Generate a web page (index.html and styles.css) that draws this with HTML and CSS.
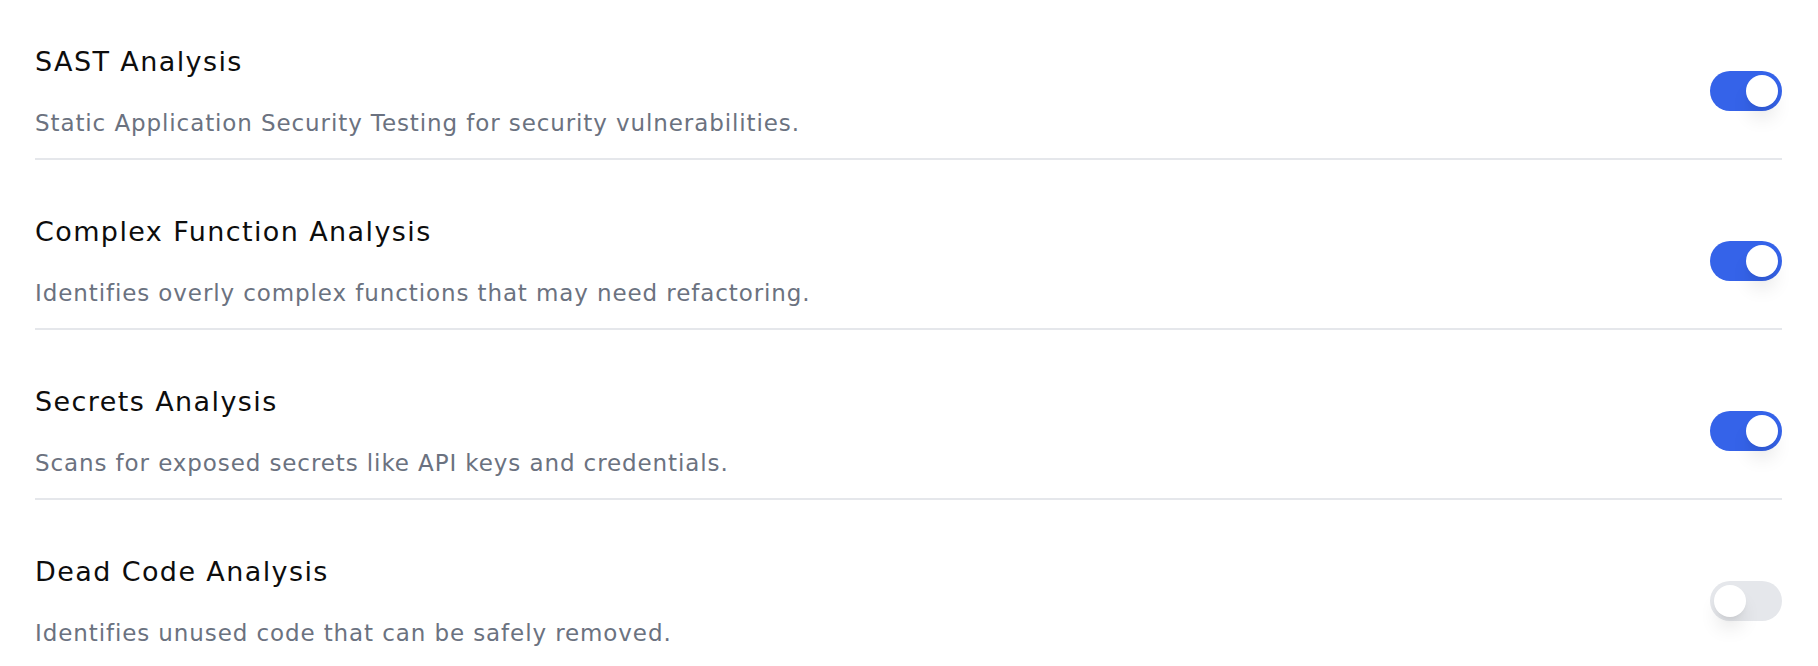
FILE: index.html
```html
<!DOCTYPE html>
<html lang="en">
<head>
  <meta charset="UTF-8">
  <meta name="viewport" content="width=device-width, initial-scale=1.0">
  <title>Analysis Settings</title>
  <link rel="stylesheet" href="styles.css">
</head>
<body>
  <div class="settings">
    <div class="setting-row">
      <div class="setting-text">
        <h3 class="setting-title">SAST Analysis</h3>
        <p class="setting-desc">Static Application Security Testing for security vulnerabilities.</p>
      </div>
      <label class="toggle">
        <input type="checkbox" checked>
        <span class="track"><span class="knob"></span></span>
      </label>
    </div>

    <div class="setting-row">
      <div class="setting-text">
        <h3 class="setting-title">Complex Function Analysis</h3>
        <p class="setting-desc">Identifies overly complex functions that may need refactoring.</p>
      </div>
      <label class="toggle">
        <input type="checkbox" checked>
        <span class="track"><span class="knob"></span></span>
      </label>
    </div>

    <div class="setting-row">
      <div class="setting-text">
        <h3 class="setting-title">Secrets Analysis</h3>
        <p class="setting-desc">Scans for exposed secrets like API keys and credentials.</p>
      </div>
      <label class="toggle">
        <input type="checkbox" checked>
        <span class="track"><span class="knob"></span></span>
      </label>
    </div>

    <div class="setting-row">
      <div class="setting-text">
        <h3 class="setting-title">Dead Code Analysis</h3>
        <p class="setting-desc">Identifies unused code that can be safely removed.</p>
      </div>
      <label class="toggle">
        <input type="checkbox">
        <span class="track"><span class="knob"></span></span>
      </label>
    </div>
  </div>
</body>
</html>
```

FILE: styles.css
```css
/* Global */
body {
  margin: 0;
  padding: 0;
  background-color: #ffffff;
  font-family: "DejaVu Sans", "Open Sans", sans-serif;
  color: #0d0d0d;
}

.settings {
  padding: 0 36px 0 35px;
}

/* Rows */
.setting-row {
  display: flex;
  align-items: center;
  justify-content: space-between;
  padding: 52px 0 18px;
  border-bottom: 2px solid #e5e7eb;
}

.setting-row:first-child {
  padding-top: 42px;
}

.setting-row:last-child {
  border-bottom: none;
}

.setting-title {
  margin: 0;
  font-size: 27px;
  font-weight: 400;
  line-height: 40px;
  letter-spacing: 1.4px;
  color: #0d0d0d;
}

.setting-desc {
  margin: 24px 0 0;
  font-size: 23px;
  line-height: 34px;
  letter-spacing: 0.9px;
  color: #6b7280;
}

/* Toggle switch */
.toggle {
  position: relative;
  cursor: pointer;
}

.toggle input {
  display: none;
}

.track {
  display: flex;
  align-items: center;
  width: 72px;
  height: 40px;
  padding: 4px;
  box-sizing: border-box;
  border-radius: 20px;
  background-color: #e5e7eb;
  transition: background-color 0.2s ease;
}

.knob {
  width: 32px;
  height: 32px;
  border-radius: 50%;
  background-color: #ffffff;
  box-shadow: 0 14px 20px -4px rgba(0, 0, 0, 0.12), 0 4px 6px -3px rgba(0, 0, 0, 0.08);
  transition: transform 0.2s ease;
}

.toggle input:checked + .track {
  background-color: #3563e9;
}

.toggle input:checked + .track .knob {
  transform: translateX(32px);
}
```
